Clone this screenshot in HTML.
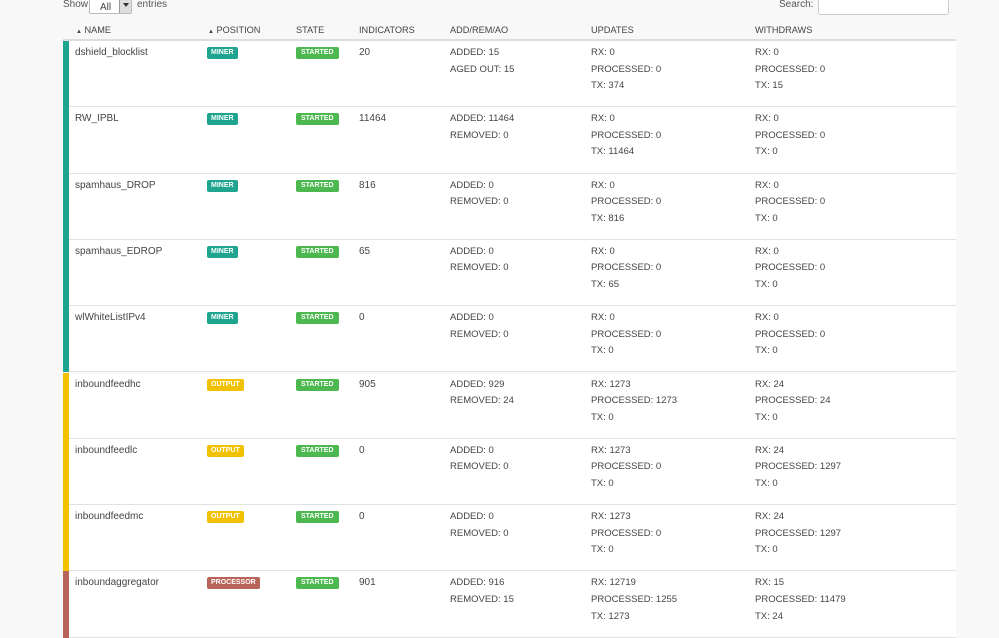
<!DOCTYPE html>
<html><head><meta charset="utf-8"><style>
body{margin:0;width:999px;height:632px;overflow:hidden;background:#f8f8f8;font-family:"Liberation Sans",sans-serif;font-size:10px;color:#444;position:relative}
.top{position:absolute;top:-1px;left:63px;font-size:10px;color:#555}
.sel{position:absolute;left:89px;top:-3px;width:43px;height:17px;border:1px solid #bbb;background:#fff;border-radius:2px;box-sizing:border-box}
.sel span{position:absolute;left:10px;top:4px;font-size:10px}
.sel i{position:absolute;right:0;top:0;width:11px;height:15px;background:#ddd;border-left:1px solid #999}
.sel i:after{content:"";position:absolute;left:3px;top:5px;border:3px solid transparent;border-top:4px solid #333}
.search{position:absolute;left:818px;top:-3px;width:131px;height:18px;border:1px solid #ccc;background:#fff;border-radius:3px;box-sizing:border-box}
.th{position:absolute;top:25px;font-size:9.2px;color:#444}
.hl{position:absolute;left:63px;top:39px;width:893px;height:2px;background:#ddd}
.row{position:absolute;left:63px;width:893px;background:#fff;border-bottom:1px solid #e2e2e2;box-sizing:border-box}
.bar{position:absolute;left:0;top:0;bottom:-1px;width:6px}
.c{position:absolute;top:4px;line-height:16.6px;font-size:9.5px}
.n{font-size:10px}
.b{display:inline-block;height:12px;line-height:12px;font-size:7px;font-weight:bold;color:#fff;padding:0 4px;border-radius:2px;vertical-align:top;margin-top:2px}
</style></head><body>
<div class="top">Show</div><div class="sel"><span>All</span><i></i></div><div class="top" style="left:137px">entries</div>
<div class="top" style="left:779px">Search:</div><div class="search"></div>
<div class="th" style="left:76px"><span style="font-size:6px">▲</span> NAME</div>
<div class="th" style="left:208px"><span style="font-size:6px">▲</span> POSITION</div>
<div class="th" style="left:296px">STATE</div>
<div class="th" style="left:359px">INDICATORS</div>
<div class="th" style="left:450px">ADD/REM/AO</div>
<div class="th" style="left:591px">UPDATES</div>
<div class="th" style="left:755px">WITHDRAWS</div>
<div class="hl"></div>
<div id="rows"></div>
<script>
var d=[["dshield_blocklist","MINER","20",["ADDED: 15","AGED OUT: 15"],["RX: 0","PROCESSED: 0","TX: 374"],["RX: 0","PROCESSED: 0","TX: 15"]],
["RW_IPBL","MINER","11464",["ADDED: 11464","REMOVED: 0"],["RX: 0","PROCESSED: 0","TX: 11464"],["RX: 0","PROCESSED: 0","TX: 0"]],
["spamhaus_DROP","MINER","816",["ADDED: 0","REMOVED: 0"],["RX: 0","PROCESSED: 0","TX: 816"],["RX: 0","PROCESSED: 0","TX: 0"]],
["spamhaus_EDROP","MINER","65",["ADDED: 0","REMOVED: 0"],["RX: 0","PROCESSED: 0","TX: 65"],["RX: 0","PROCESSED: 0","TX: 0"]],
["wlWhiteListIPv4","MINER","0",["ADDED: 0","REMOVED: 0"],["RX: 0","PROCESSED: 0","TX: 0"],["RX: 0","PROCESSED: 0","TX: 0"]],
["inboundfeedhc","OUTPUT","905",["ADDED: 929","REMOVED: 24"],["RX: 1273","PROCESSED: 1273","TX: 0"],["RX: 24","PROCESSED: 24","TX: 0"]],
["inboundfeedlc","OUTPUT","0",["ADDED: 0","REMOVED: 0"],["RX: 1273","PROCESSED: 0","TX: 0"],["RX: 24","PROCESSED: 1297","TX: 0"]],
["inboundfeedmc","OUTPUT","0",["ADDED: 0","REMOVED: 0"],["RX: 1273","PROCESSED: 0","TX: 0"],["RX: 24","PROCESSED: 1297","TX: 0"]],
["inboundaggregator","PROCESSOR","901",["ADDED: 916","REMOVED: 15"],["RX: 12719","PROCESSED: 1255","TX: 1273"],["RX: 15","PROCESSED: 11479","TX: 24"]]];
var col={MINER:"#1fa58f",OUTPUT:"#f2c200",PROCESSOR:"#b9645a"};
var h="";
d.forEach(function(r,i){var t=41+i*66.3;
h+='<div class="row" style="top:'+t+'px;height:66.3px"><div class="bar" style="background:'+col[r[1]]+'"></div>'+
'<div class="c n" style="left:12px">'+r[0]+'</div>'+
'<div class="c" style="left:144px"><span class="b" style="background:'+col[r[1]]+'">'+r[1]+'</span></div>'+
'<div class="c" style="left:233px"><span class="b" style="background:#4cb84f;padding:0 5px">STARTED</span></div>'+
'<div class="c n" style="left:296px">'+r[2]+'</div>'+
'<div class="c" style="left:387px">'+r[3].join('<br>')+'</div>'+
'<div class="c" style="left:528px">'+r[4].join('<br>')+'</div>'+
'<div class="c" style="left:692px">'+r[5].join('<br>')+'</div></div>';});
document.getElementById("rows").innerHTML=h;
</script>
</body></html>
